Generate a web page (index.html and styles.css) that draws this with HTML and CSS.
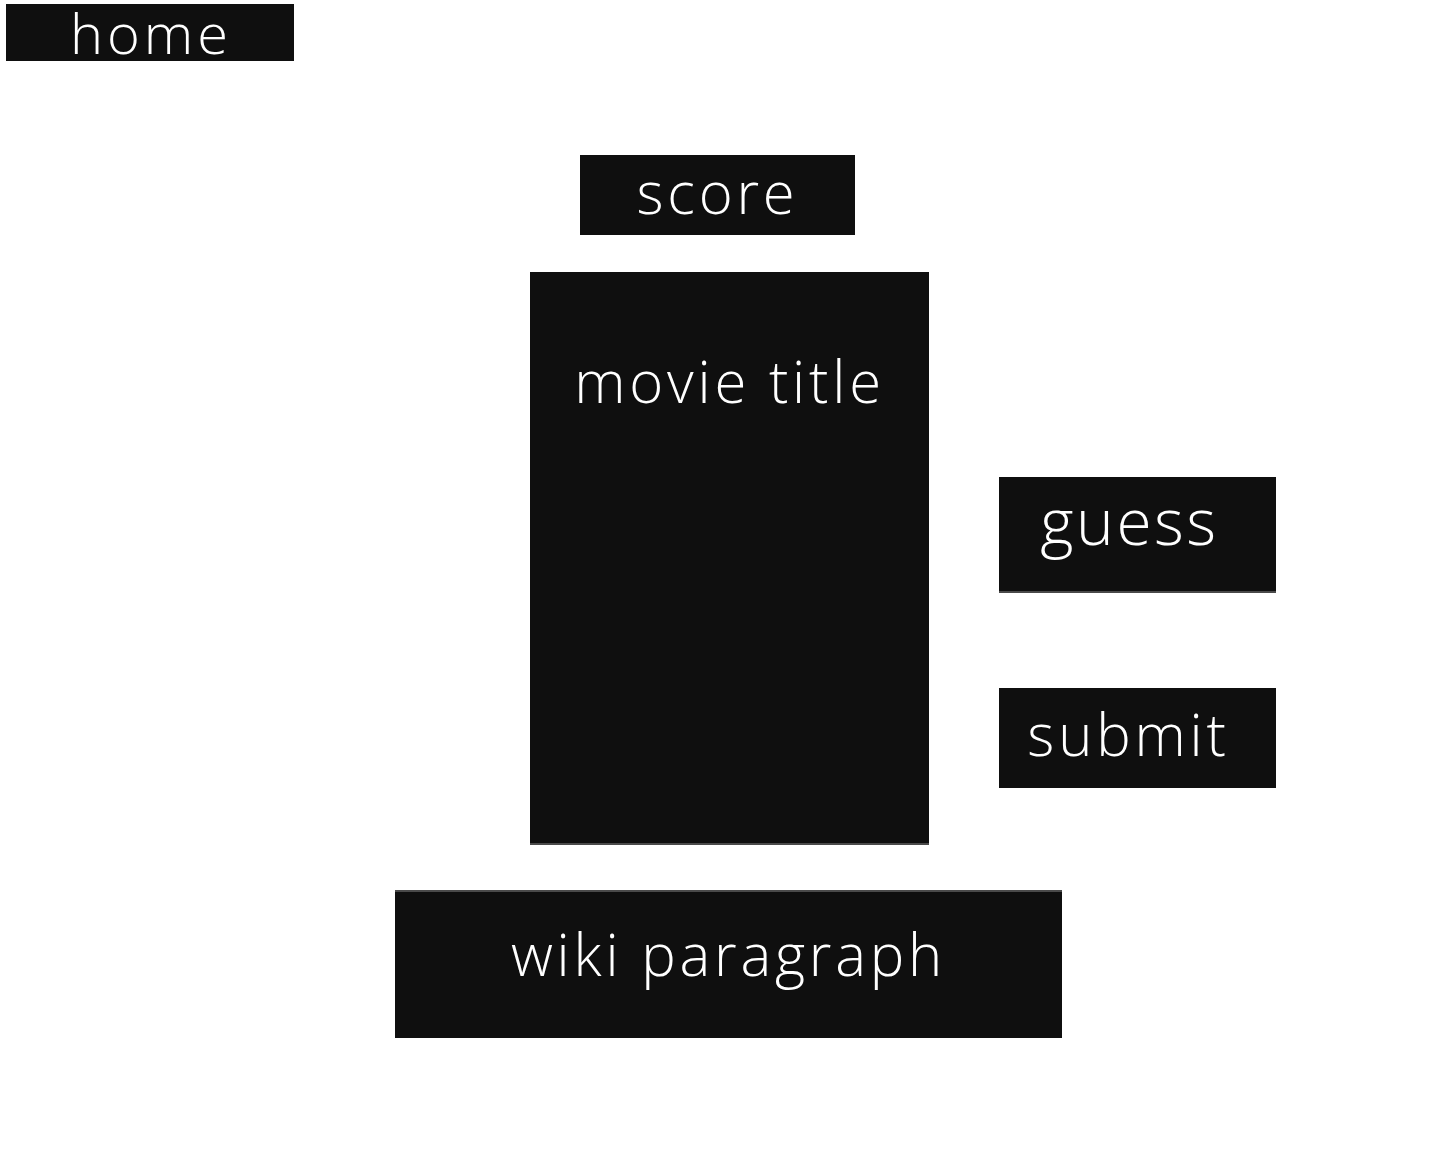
FILE: index.html
```html
<!DOCTYPE html>
<html lang="en">
<head>
<meta charset="utf-8">
<title>Movie guess</title>
<link rel="stylesheet" href="styles.css">
</head>
<body>
<div class="page">
  <div class="box home">home</div>
  <div class="box score">score</div>
  <div class="play">
    <div class="box movie">movie title</div>
    <div class="actions">
      <div class="box guess">guess</div>
      <div class="box submit">submit</div>
    </div>
  </div>
  <div class="box wiki">wiki paragraph</div>
</div>
</body>
</html>
```
FILE: styles.css
```css
html, body {
  margin: 0;
  padding: 0;
  background: #ffffff;
}

.page {
  padding: 4px 0 0 6px;
  font-family: "Open Sans", "DejaVu Sans", sans-serif;
  font-weight: 300;
  color: #ffffff;
}

.box {
  background: #0f0f0f;
  display: flex;
  align-items: center;
  justify-content: center;
  box-sizing: border-box;
  font-size: 58px;
  letter-spacing: 3.8px;
  line-height: 1;
  white-space: nowrap;
}

.home {
  display: block;
  width: 288px;
  height: 57px;
  font-size: 56px;
  line-height: 57px;
  text-align: center;
  letter-spacing: 4px;
  padding-left: 2px;
}

.score {
  width: 275px;
  height: 80px;
  margin: 94px 0 0 574px;
  padding-bottom: 6px;
}

.play {
  display: flex;
  margin: 37px 0 0 524px;
}

.movie {
  width: 399px;
  height: 573px;
  align-items: flex-start;
  padding-top: 80px;
  border-bottom: 2px solid #4a4a4a;
}

.actions {
  display: flex;
  flex-direction: column;
  gap: 95px;
  margin: 205px 0 0 70px;
}

.guess {
  width: 277px;
  height: 116px;
  padding: 0 16px 26px 0;
  font-size: 64px;
  letter-spacing: 2.5px;
  border-bottom: 2px solid #4a4a4a;
}

.submit {
  width: 277px;
  height: 100px;
  padding: 0 18px 8px 0;
}

.wiki {
  width: 667px;
  height: 148px;
  margin: 45px 0 0 389px;
  border-top: 2px solid #4a4a4a;
  padding-bottom: 22px;
}
```
